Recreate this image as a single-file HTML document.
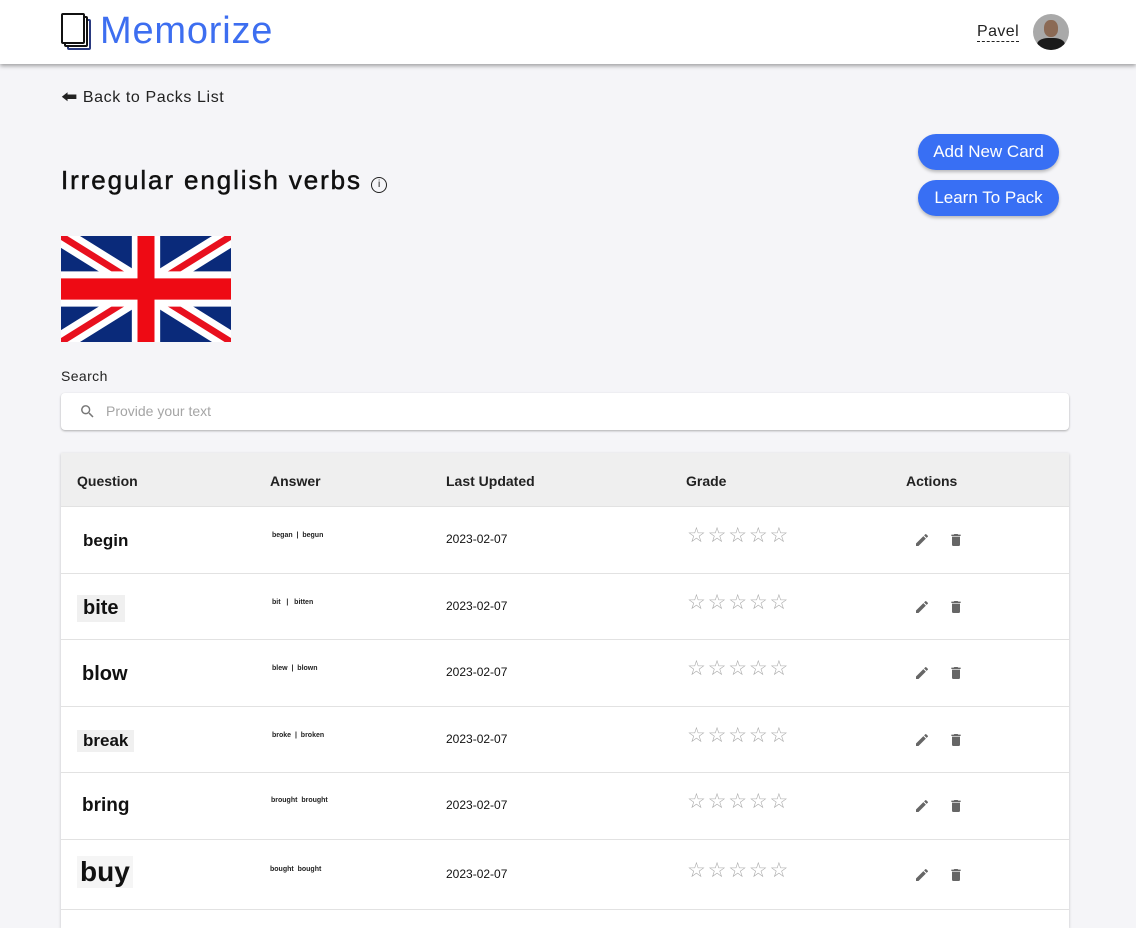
<!DOCTYPE html>
<html style="width:1136px;height:928px;overflow:hidden"><head><meta charset="utf-8"><style>
*{box-sizing:border-box;margin:0;padding:0}
body{width:1136px;height:928px;overflow:hidden;background:#f5f5f8;font-family:"Liberation Sans",sans-serif;color:#111;position:relative}
.hdr{position:absolute;left:0;top:0;width:1136px;height:64px;background:#fff;box-shadow:0 2px 4px rgba(0,0,0,.35)}
.logo{position:absolute;left:100px;top:10px;font-size:38px;color:#3d6ef0;letter-spacing:.8px}
.pavel{position:absolute;left:977px;top:22px;font-size:16px;color:#222;border-bottom:1px dashed #222;line-height:19px;letter-spacing:.4px}
.av{position:absolute;left:1033px;top:14px;width:36px;height:36px;border-radius:50%;background:#a9a9a9;overflow:hidden}
.back{position:absolute;left:61px;top:86px;font-size:16px;color:#222;letter-spacing:.6px}
h1{position:absolute;left:61px;top:165px;font-size:26px;font-weight:normal;color:#111;letter-spacing:1.9px;-webkit-text-stroke:.5px #111}
.btn{position:absolute;left:918px;width:141px;height:36px;border-radius:18px;background:#386ff4;color:#fff;font-size:17px;text-align:center;line-height:36px;box-shadow:0 2px 3px rgba(0,0,0,.25)}
.search-l{position:absolute;left:61px;top:368px;font-size:14px;color:#222;letter-spacing:.4px}
.search{position:absolute;left:61px;top:393px;width:1008px;height:37px;background:#fff;border-radius:4px;box-shadow:0 1px 2px rgba(0,0,0,.3);font-size:14px;color:#a5a5a5;padding:10px 0 0 45px}
.tbl{position:absolute;left:61px;top:453px;width:1008px;height:475px;background:#fff;box-shadow:0 1px 3px rgba(0,0,0,.2)}
.th{height:53px;background:#efefef;position:relative;font-size:14px;font-weight:bold;color:#222}
.th span,.row span{position:absolute}
.row{position:relative;border-top:1px solid #e2e2e2;height:66.5px}
.q{font-family:"Liberation Sans",sans-serif;font-weight:bold;color:#111;padding:2px 4px}
.a{font-size:7px;font-weight:bold;color:#222}
.d{font-size:12px;color:#111;left:385px}
.st{left:626px;color:#aaa;font-size:21px;letter-spacing:1.8px}
</style></head><body>
<div class="hdr">
<svg style="position:absolute;left:60px;top:12px" width="34" height="40" viewBox="0 0 34 40" fill="none" stroke="#111" stroke-width="2"><rect x="8" y="8" width="22" height="29" rx="1" stroke="#2a3a80"/><rect x="5" y="5" width="22" height="29" rx="1" fill="#fff"/><rect x="2" y="2" width="22" height="29" rx="1" fill="#fff"/></svg>
<div class="logo">Memorize</div>
<div class="pavel">Pavel</div>
<div class="av"><div style="position:absolute;left:11px;top:6px;width:14px;height:17px;border-radius:45%;background:#8b6a55"></div><div style="position:absolute;left:4px;top:24px;width:28px;height:16px;border-radius:40% 40% 0 0;background:#1a1a1a"></div></div>
</div>
<div class="back">&#129072; Back to Packs List</div>
<h1>Irregular english verbs <span style="display:inline-block;width:16px;height:16px;border:1.5px solid #222;border-radius:50%;font-size:10px;line-height:13px;text-align:center;vertical-align:2px;letter-spacing:0;-webkit-text-stroke:0">i</span></h1>
<div class="btn" style="top:134px">Add New Card</div>
<div class="btn" style="top:180px">Learn To Pack</div>
<svg style="position:absolute;left:61px;top:236px" width="170" height="106" viewBox="0 0 60 30" preserveAspectRatio="none"><rect width="60" height="30" fill="#0a2a7a"/><path d="M0,0 60,30M60,0 0,30" stroke="#fff" stroke-width="6"/><path d="M0,0 60,30M60,0 0,30" stroke="#e8101e" stroke-width="2"/><path d="M30,0v30M0,15h60" stroke="#fff" stroke-width="10"/><path d="M30,0v30M0,15h60" stroke="#ee0a14" stroke-width="6"/></svg>
<div class="search-l">Search</div>
<div class="search"><svg style="position:absolute;left:18px;top:10px" width="17" height="17" viewBox="0 0 24 24"><path fill="#777" d="M15.5 14h-.8l-.3-.3A6.5 6.5 0 1 0 9.5 16a6.5 6.5 0 0 0 4.2-1.6l.3.3v.8l5 5 1.5-1.5-5-5zm-6 0a4.5 4.5 0 1 1 0-9 4.5 4.5 0 0 1 0 9z"/></svg>Provide your text</div>
<div class="tbl">
<div class="th"><span style="left:16px;top:20px">Question</span><span style="left:209px;top:20px">Answer</span><span style="left:385px;top:20px">Last Updated</span><span style="left:625px;top:20px">Grade</span><span style="left:845px;top:20px">Actions</span></div>
<div class="row"><span class="q" style="left:18px;top:22px;font-size:17px">begin</span><span class="a" style="left:211px;top:25px">began &nbsp;|&nbsp; begun</span><span class="d" style="top:25px">2023-02-07</span><span class="st" style="top:16px">☆☆☆☆☆</span><svg style="position:absolute;left:853px;top:25px" width="16" height="16" viewBox="0 0 24 24"><path fill="#666" d="M3 17.25V21h3.75L17.8 9.94l-3.75-3.75L3 17.25zM20.7 7.04a1 1 0 0 0 0-1.41l-2.34-2.34a1 1 0 0 0-1.41 0l-1.83 1.83 3.75 3.75 1.83-1.83z"/></svg><svg style="position:absolute;left:887px;top:25px" width="16" height="16" viewBox="0 0 24 24"><path fill="#666" d="M6 19a2 2 0 0 0 2 2h8a2 2 0 0 0 2-2V7H6v12zM19 4h-3.5l-1-1h-5l-1 1H5v2h14V4z"/></svg></div>
<div class="row"><span class="q" style="left:16px;top:21px;font-size:20px;background:#f0f0f0;padding:2px 6px">bite</span><span class="a" style="left:211px;top:25px">bit &nbsp;&nbsp;|&nbsp;&nbsp; bitten</span><span class="d" style="top:25px">2023-02-07</span><span class="st" style="top:16px">☆☆☆☆☆</span><svg style="position:absolute;left:853px;top:25px" width="16" height="16" viewBox="0 0 24 24"><path fill="#666" d="M3 17.25V21h3.75L17.8 9.94l-3.75-3.75L3 17.25zM20.7 7.04a1 1 0 0 0 0-1.41l-2.34-2.34a1 1 0 0 0-1.41 0l-1.83 1.83 3.75 3.75 1.83-1.83z"/></svg><svg style="position:absolute;left:887px;top:25px" width="16" height="16" viewBox="0 0 24 24"><path fill="#666" d="M6 19a2 2 0 0 0 2 2h8a2 2 0 0 0 2-2V7H6v12zM19 4h-3.5l-1-1h-5l-1 1H5v2h14V4z"/></svg></div>
<div class="row"><span class="q" style="left:17px;top:21px;font-size:20px">blow</span><span class="a" style="left:211px;top:25px">blew &nbsp;|&nbsp; blown</span><span class="d" style="top:25px">2023-02-07</span><span class="st" style="top:16px">☆☆☆☆☆</span><svg style="position:absolute;left:853px;top:25px" width="16" height="16" viewBox="0 0 24 24"><path fill="#666" d="M3 17.25V21h3.75L17.8 9.94l-3.75-3.75L3 17.25zM20.7 7.04a1 1 0 0 0 0-1.41l-2.34-2.34a1 1 0 0 0-1.41 0l-1.83 1.83 3.75 3.75 1.83-1.83z"/></svg><svg style="position:absolute;left:887px;top:25px" width="16" height="16" viewBox="0 0 24 24"><path fill="#666" d="M6 19a2 2 0 0 0 2 2h8a2 2 0 0 0 2-2V7H6v12zM19 4h-3.5l-1-1h-5l-1 1H5v2h14V4z"/></svg></div>
<div class="row"><span class="q" style="left:16px;top:23px;font-size:17px;background:#f0f0f0;padding:1px 6px">break</span><span class="a" style="left:211px;top:25px">broke &nbsp;|&nbsp; broken</span><span class="d" style="top:25px">2023-02-07</span><span class="st" style="top:16px">☆☆☆☆☆</span><svg style="position:absolute;left:853px;top:25px" width="16" height="16" viewBox="0 0 24 24"><path fill="#666" d="M3 17.25V21h3.75L17.8 9.94l-3.75-3.75L3 17.25zM20.7 7.04a1 1 0 0 0 0-1.41l-2.34-2.34a1 1 0 0 0-1.41 0l-1.83 1.83 3.75 3.75 1.83-1.83z"/></svg><svg style="position:absolute;left:887px;top:25px" width="16" height="16" viewBox="0 0 24 24"><path fill="#666" d="M6 19a2 2 0 0 0 2 2h8a2 2 0 0 0 2-2V7H6v12zM19 4h-3.5l-1-1h-5l-1 1H5v2h14V4z"/></svg></div>
<div class="row"><span class="q" style="left:17px;top:20px;font-size:19px">bring</span><span class="a" style="left:210px;top:24px">brought &nbsp;brought</span><span class="d" style="top:25px">2023-02-07</span><span class="st" style="top:16px">☆☆☆☆☆</span><svg style="position:absolute;left:853px;top:25px" width="16" height="16" viewBox="0 0 24 24"><path fill="#666" d="M3 17.25V21h3.75L17.8 9.94l-3.75-3.75L3 17.25zM20.7 7.04a1 1 0 0 0 0-1.41l-2.34-2.34a1 1 0 0 0-1.41 0l-1.83 1.83 3.75 3.75 1.83-1.83z"/></svg><svg style="position:absolute;left:887px;top:25px" width="16" height="16" viewBox="0 0 24 24"><path fill="#666" d="M6 19a2 2 0 0 0 2 2h8a2 2 0 0 0 2-2V7H6v12zM19 4h-3.5l-1-1h-5l-1 1H5v2h14V4z"/></svg></div>
<div class="row" style="height:70px"><span class="q" style="left:16px;top:16px;font-size:28px;background:#f5f5f5;padding:0 3px">buy</span><span class="a" style="left:209px;top:26px">bought &nbsp;bought</span><span class="d" style="top:27px">2023-02-07</span><span class="st" style="top:18px">☆☆☆☆☆</span><svg style="position:absolute;left:853px;top:27px" width="16" height="16" viewBox="0 0 24 24"><path fill="#666" d="M3 17.25V21h3.75L17.8 9.94l-3.75-3.75L3 17.25zM20.7 7.04a1 1 0 0 0 0-1.41l-2.34-2.34a1 1 0 0 0-1.41 0l-1.83 1.83 3.75 3.75 1.83-1.83z"/></svg><svg style="position:absolute;left:887px;top:27px" width="16" height="16" viewBox="0 0 24 24"><path fill="#666" d="M6 19a2 2 0 0 0 2 2h8a2 2 0 0 0 2-2V7H6v12zM19 4h-3.5l-1-1h-5l-1 1H5v2h14V4z"/></svg></div>
<div class="row" style="height:30px"></div>
</div>
</body></html>
